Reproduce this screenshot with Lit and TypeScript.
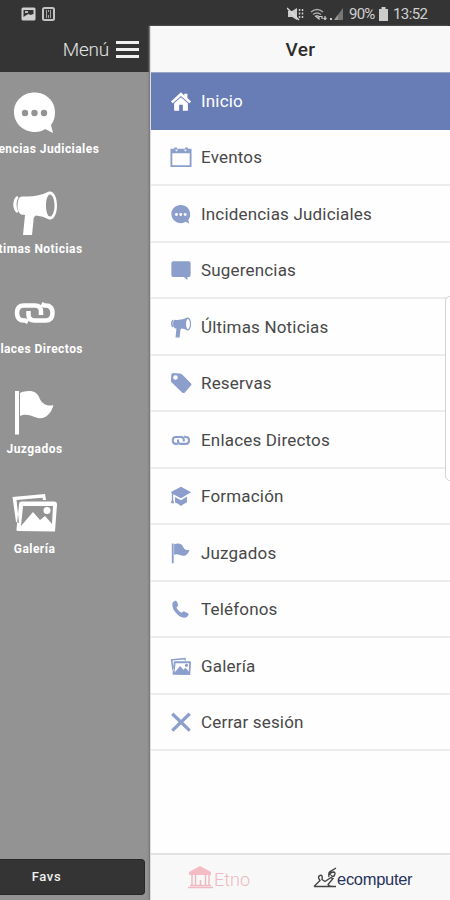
import { LitElement, html, css, svg } from "lit";
import { customElement, property } from "lit/decorators.js";

const icons: Record<string, unknown> = {
  home: svg`<path d="M24 5 2 25l4 4L24 13l18 16 4-4-8-7.500V8h-7v4zM24 16 9 29v16h11V32h8v13h11V29z"/>`,
  calendar: svg`<path fill-rule="evenodd" d="M1 6h8V3h6v3h18V3h6v3h8v40H1zM5 16v26h38V16zM11 8l3 4 4-4zM30 8l4 4 3-4z"/>`,
  chat: svg`<path fill-rule="evenodd" d="M23.500 4.500C12 4.500 3 13 3 24s9 20 21 20c4 0 8-1 10-3l8 4-2-8c3-4 4-8 4-13 0-11-9-19.500-20.500-19.500zM14 21.800a3.200 3.200 0 1 1 0 6.400 3.200 3.200 0 0 1 0-6.400zm9.500 0a3.200 3.200 0 1 1 0 6.400 3.200 3.200 0 0 1 0-6.400zm9.500 0a3.200 3.200 0 1 1 0 6.400 3.200 3.200 0 0 1 0-6.400z"/>`,
  comment: svg`<path d="M7 5h34q4 0 4 4v26q0 4-4 4h-3v7l-8-7H7q-4 0-4-4V9q0-4 4-4z"/>`,
  horn: svg`<path d="M6 8C1 11 1 22 6 25l1.500-1.500C5 20 5 13 7.500 9.500z"/><path fill-rule="evenodd" d="M8.500 9.500Q10 8 14 8.500 27 9 38 3.500c5-1 8 6 8 14s-3 15-8 14Q32 28 25 27.500q-3 2-2.500 5L21 47h-9l2-20-4-.5Q6 23 6.500 17 7 11 8.500 9.500zM39 6.500c-2.500 0-4 5-4 11s1.500 11 4 11 4.500-5 4.500-11-2-11-4.500-11z"/>`,
  tag: svg`<path fill-rule="evenodd" d="M3 5 6 2l15 1q3 0 5 2l20 20q2 2 0 4L32 45q-3 2-5 0L5 24q-3-2-3-5zM12 7a5 5 0 1 0 0 10 5 5 0 0 0 0-10z"/>`,
  link: svg`<g fill="none" stroke="currentColor" stroke-width="4.500"><path d="m17 34-3-1.500h-1Q6 32.500 6 25t7-7.500h11q6 0 6 6v3.500"/><path d="m30.500 16 3 1.500h1q7 0 7 7.500t-7 7.500h-11q-6 0-6-6V23"/></g>`,
  cap: svg`<path d="M24 4 2 15l2 3v14l-2 8h7l-2-8V20l17 9 22-13zM11 26v12q6 1 13 8 7-7 13-8V25l-13 8z"/>`,
  flag: svg`<path d="M4 3h4v43.500H4zM9 5c7-3 16-3 19 4 3 8 9 9.500 14.500 8C40 26 34 31.500 27 30c-7-2-12-5-18-2z"/>`,
  phone: svg`<path d="m6 9 5-3q4-1 5 4l2 6-4 5q4 7 11 11l5-3 9 4q3 2 1 5l-4 4c-8 3-17-1-25-12C5 22 4 14 6 9z"/>`,
  gallery: svg`<path fill-rule="evenodd" d="M1.500 9 34 6l1 6-3-.1-.5-2.200L5.500 12 8 35l-3-1zM11 13.500h32q3 0 3 3l-2 27-37-.5q-2 0-1.500-2L8 16.500q0-3 3-3zM12 18 10 38l12-14 7 8 5-4 7 8 1-18zM36 19a3.500 3.500 0 1 1 0 7 3.500 3.500 0 0 1 0-7z"/>`,
  close: svg`<path fill="none" stroke="currentColor" stroke-width="7" d="m5 6 38 37M43 6 5 43"/>`,
};

@customElement("app-icon")
class AppIcon extends LitElement {
  @property() name = "";
  static styles = css`
    :host { display: block; flex: none; width: var(--size, 22px); height: var(--size, 22px); }
    svg { display: block; width: 100%; height: 100%; fill: currentColor; }
  `;
  render() {
    return html`<svg viewBox="0 0 48 48">${icons[this.name]}</svg>`;
  }
}

const favs = [
  ["chat", "Incidencias Judiciales"],
  ["horn", "Últimas Noticias"],
  ["link", "Enlaces Directos"],
  ["flag", "Juzgados"],
  ["gallery", "Galería"],
];

const menu = [
  ["home", "Inicio"],
  ["calendar", "Eventos"],
  ["chat", "Incidencias Judiciales"],
  ["comment", "Sugerencias"],
  ["horn", "Últimas Noticias"],
  ["tag", "Reservas"],
  ["link", "Enlaces Directos"],
  ["cap", "Formación"],
  ["flag", "Juzgados"],
  ["phone", "Teléfonos"],
  ["gallery", "Galería"],
  ["close", "Cerrar sesión"],
];

@customElement("app-root")
class AppRoot extends LitElement {
  static styles = css`
    :host { display: flex; flex-direction: column; position: relative; width: 450px; height: 900px; overflow: hidden; font-family: Roboto, sans-serif; background: #fff; }
    * { box-sizing: border-box; }
    .status { height: 26px; flex: none; display: flex; align-items: center; background: #343434; color: #d0d0d0; padding: 1px 22px 0 21px; font-size: 15px; }
    .status svg { display: block; flex: none; }
    .left-icons { display: flex; gap: 6px; margin-right: auto; }
    .mute { margin-right: 6px; }
    .signal { margin: 0 5px 0 2px; }
    .pct { width: 27px; letter-spacing: -0.75px; white-space: nowrap; }
    .batt { margin: 0 5px 0 3px; }
    .time { width: 35px; letter-spacing: -0.6px; white-space: nowrap; }
    .body { flex: 1; display: flex; min-height: 0; }
    .side { width: 150px; flex: none; display: flex; flex-direction: column; background: #939393; overflow: hidden; border-right: 1px solid #858585; }
    .bar { height: 46px; flex: none; display: flex; align-items: center; justify-content: flex-end; gap: 7px; padding: 0 10px 0 0; margin-right: -1px; background: #343434; color: #e4e4e4; font-size: 19px; font-weight: 300; letter-spacing: -0.2px; border-right: 1px solid #111; }
    .burger { width: 23px; display: flex; flex-direction: column; gap: 4px; }
    .burger i { height: 3px; background: #f0f0f0; }
    .favs { flex: 1; width: 69px; padding-top: 16px; color: #fff; }
    .fav { height: 100px; display: flex; flex-direction: column; align-items: center; --size: 48px; }
    .fav span { margin-top: 6px; line-height: 14px; font-size: 12px; font-weight: 700; letter-spacing: 0.45px; white-space: nowrap; }
    .favbtn { height: 36px; flex: none; margin: 0 4px 5px 0; padding: 0 51px 1px 0; display: flex; align-items: center; justify-content: center; background: #343434; border: 1px solid #282828; border-left: 0; border-radius: 0 4px 4px 0; color: #f0f0f0; font-size: 13px; font-weight: 500; letter-spacing: 0.6px; }
    .main { flex: 1; display: flex; flex-direction: column; background: #fefefe; box-shadow: -1px 0 2px #777; border-left: 1px solid #dedede; }
    .title { height: 46px; flex: none; display: flex; align-items: center; justify-content: center; background: #f8f8f8; color: #2c2c2c; font-size: 19px; font-weight: 500; letter-spacing: 0.4px; }
    .list { height: 679px; flex: none; display: grid; grid-template-rows: repeat(12, 1fr); border-top: 1px solid #9aa5c6; }
    .row { display: flex; align-items: center; gap: 9px; padding: 1px 0 0 19px; border-bottom: 2px solid #ececec; color: #484848; font-size: 17px; letter-spacing: 0.18px; }
    .row app-icon { color: #8c9ecc; }
    .row.on { background: #687cb5; border-color: #687cb5; color: #fff; }
    .row.on app-icon { color: #fff; }
    .foot { height: 47px; flex: none; margin-top: auto; display: flex; align-items: center; background: #f8f8f8; border-top: 2px solid #e2e2e2; padding: 3px 0 0 36px; }
    .foot svg { display: block; margin-top: -3px; }
    .etno { width: 125px; display: flex; align-items: center; color: #eeb9c2; font-size: 18px; font-weight: 300; }
    .eco { display: flex; align-items: center; color: #28335c; font-family: "Liberation Sans", sans-serif; font-size: 16.500px; letter-spacing: -0.3px; }
    .edge { position: absolute; right: -6px; top: 296px; width: 11px; height: 185px; background: #fff; border: 1.500px solid #d4d4d4; border-radius: 5px; }
  `;

  render() {
    return html`
      <header class="status">
        <div class="left-icons">
          <svg width="15" height="14" viewBox="0 0 15 14"><rect x=".5" y=".5" width="14" height="13" rx="1.500" fill="#d0d0d0"/><path d="M2.500 3h10v4l-3 1-2-1-2 1-3 2z" fill="#343434"/><path d="M4 4h3v2H4z" fill="#bbb"/></svg>
          <svg width="13" height="14" viewBox="0 0 13 14"><rect x="1" y="1" width="11" height="12" rx="1.500" fill="none" stroke="#c4c4c4" stroke-width="2"/><path d="M4.500 3v8M8.500 3v8M6.500 3v2M6.500 8v3" stroke="#a4a4a4"/></svg>
        </div>
        <svg class="mute" width="17" height="14" viewBox="0 0 17 14"><path d="M1 4h4l5-3v12l-5-3H1z" fill="#ccc"/><path d="m0 1 12 12" stroke="#ddd" stroke-width="1.500"/><path d="M12.500 2v10M15.500 2v10" stroke="#ccc" stroke-width="1.500" stroke-dasharray="2 1.500"/></svg>
        <svg width="18" height="14" viewBox="0 0 18 14"><path d="M1 5q6-5 12 0M3 7.500q4-3 8 0M5 9.500q2-1.500 4 0" fill="none" stroke="#aaa" stroke-width="1.500"/><path d="M5.500 9 9 12V9.500h3.500M12 9v3M15 9v3.500m-1.500-1.500 1.500 1.500 1.500-1.500" fill="none" stroke="#ccc" stroke-width="1.200"/></svg>
        <svg class="signal" width="14" height="14" viewBox="0 0 14 14"><path d="M4 13 13 1v12z" fill="#777"/><path d="M0 11h2v2H0z" fill="#ccc"/><path d="m4 13 4-5v5z" fill="#999"/></svg>
        <span class="pct">90%</span>
        <svg class="batt" width="9" height="14" viewBox="0 0 9 14"><path d="M2.500 0h4v2H9v12H0V2h2.500z" fill="#ccc"/></svg>
        <span class="time">13:52</span>
      </header>
      <div class="body">
        <aside class="side">
          <div class="bar"><span>Menú</span><div class="burger"><i></i><i></i><i></i></div></div>
          <div class="favs">
            ${favs.map(([icon, label]) => html`<div class="fav"><app-icon name=${icon}></app-icon><span>${label}</span></div>`)}
          </div>
          <div class="favbtn">Favs</div>
        </aside>
        <main class="main">
          <div class="title">Ver</div>
          <nav class="list">
            ${menu.map(([icon, label], i) => html`<div class="row ${i === 0 ? "on" : ""}"><app-icon name=${icon}></app-icon><span>${label}</span></div>`)}
          </nav>
          <footer class="foot">
            <div class="etno">
              <svg width="27" height="25" viewBox="0 0 27 25"><path d="m13 1 11 6v3H2V7z" fill="#f4bcc5"/><path d="M5 10v10M8.500 10v10M18.500 10v10M22 10v10M13.500 20v-5M3 20.500h21M1 22.500h25" fill="none" stroke="#eeb9c2" stroke-width="1.500"/></svg>
              <span>Etno</span>
            </div>
            <div class="eco">
              <svg width="25" height="24" viewBox="0 0 25 24"><path d="M2 20.500h22M2 20.500l6-6q-3-4 0-5t2 4l3 2 6-4 2 1-5 6q1 2 5 2M17 11q-1-5 2-6l5-3M18 9q0-3 4-3 2 1 0 4-2 1-3-1" fill="none" stroke="#444" stroke-width="1.400"/></svg>
              <span>ecomputer</span>
            </div>
          </footer>
        </main>
      </div>
      <div class="edge"></div>
    `;
  }
}
